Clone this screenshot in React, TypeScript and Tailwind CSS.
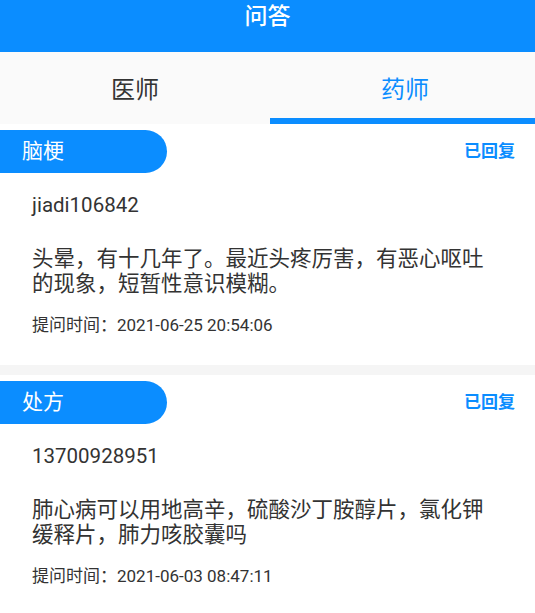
const questions = [
  {
    id: 1,
    tag: '脑梗',
    status: '已回复',
    user: 'jiadi106842',
    content: '头晕，有十几年了。最近头疼厉害，有恶心呕吐的现象，短暂性意识模糊。',
    time: '2021-06-25 20:54:06',
  },
  {
    id: 2,
    tag: '处方',
    status: '已回复',
    user: '13700928951',
    content: '肺心病可以用地高辛，硫酸沙丁胺醇片，氯化钾缓释片，肺力咳胶囊吗',
    time: '2021-06-03 08:47:11',
  },
];

export default function App() {
  const active = 1;
  const tabs = ['医师', '药师'];

  return (
    <div
      className="w-[535px] h-[613px] overflow-hidden bg-white"
      style={{ fontFamily: "Roboto, 'Noto Sans CJK SC', sans-serif" }}
    >
      <div className="h-[52px] bg-[#0b8dff] flex justify-center">
        <span className="h-[34px] leading-[34px] text-[23px] font-medium text-white">问答</span>
      </div>

      <div className="h-[72px] bg-[#fafafa] grid grid-cols-[270px_270px] overflow-hidden">
        {tabs.map((tab, i) => (
          <div key={tab} className="relative flex items-center justify-center">
            <span className={`text-[24px] leading-[30px] mb-[-4px] ${i === active ? 'text-[#0b8dff]' : 'text-[#333]'}`}>
              {tab}
            </span>
            {i === active && <div className="absolute left-0 right-0 bottom-0 h-[6px] bg-[#0b8dff]" />}
          </div>
        ))}
      </div>

      {questions.map((q) => (
        <div key={q.id}>
          <div className="pt-[6px] pb-[28px] bg-white">
            <div className="flex items-center justify-between pr-[20px]">
              <div className="w-[167px] h-[43px] rounded-r-full bg-[#0b8dff] flex items-center pl-[22px]">
                <span className="text-[21px] text-white leading-none">{q.tag}</span>
              </div>
              <span className="text-[17px] font-semibold text-[#0b8dff]">{q.status}</span>
            </div>
            <div className="px-[32px]">
              <p className="mt-[18px] text-[20.5px] leading-[28px] text-[#333]">{q.user}</p>
              <p className="mt-[27px] text-[21.5px] leading-[25px] text-[#333]">{q.content}</p>
              <p className="mt-[17px] text-[17px] leading-[24px] text-[#333]">提问时间：{q.time}</p>
            </div>
          </div>
          <div className="h-[10px] bg-[#f5f5f5]" />
        </div>
      ))}
    </div>
  );
}
